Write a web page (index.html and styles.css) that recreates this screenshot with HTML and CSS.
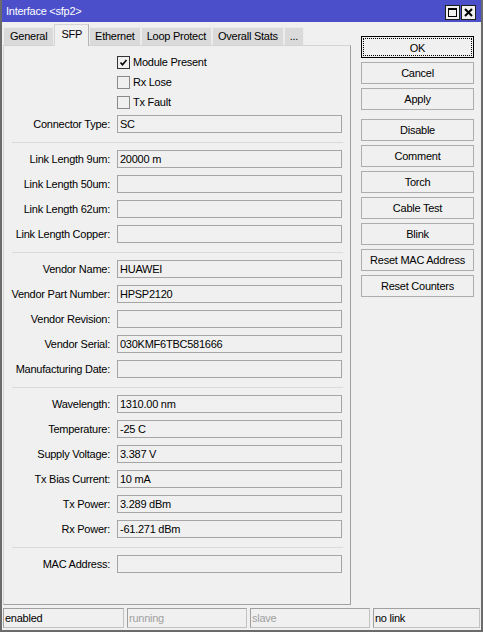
FILE: index.html
```html
<!DOCTYPE html>
<html lang="en">
<head>
    <meta charset="UTF-8">
    <title>Interface &lt;sfp2&gt;</title>
    <link rel="stylesheet" href="styles.css">
</head>
<body>
    <div class="window">
        <div class="titlebar">
            <span class="title">Interface &lt;sfp2&gt;</span>
            <div class="title-buttons">
                <span class="tbtn">
                    <svg width="13" height="13" viewBox="0 0 13 13"><rect x="2.5" y="2.5" width="8" height="8" fill="none" stroke="#000"/><line x1="2" y1="3.5" x2="11" y2="3.5" stroke="#000"/></svg>
                </span>
                <span class="tbtn">
                    <svg width="13" height="13" viewBox="0 0 13 13"><path d="M3 3 L10 10 M10 3 L3 10" stroke="#000" stroke-width="2"/></svg>
                </span>
            </div>
        </div>

        <div class="main">
            <div class="left">
                <div class="tabs">
                    <div class="tab">General</div>
                    <div class="tab active">SFP</div>
                    <div class="tab">Ethernet</div>
                    <div class="tab">Loop Protect</div>
                    <div class="tab">Overall Stats</div>
                    <div class="tab">...</div>
                </div>
                <div class="panel">
                    <div class="check-row">
                        <span class="checkbox checked"><svg width="11" height="11" viewBox="0 0 11 11"><path d="M2.5 5.5 L4.5 7.8 L8.5 3" fill="none" stroke="#000" stroke-width="1.6"/></svg></span>
                        Module Present
                    </div>
                    <div class="check-row"><span class="checkbox"></span>Rx Lose</div>
                    <div class="check-row"><span class="checkbox"></span>Tx Fault</div>

                    <div class="row first"><label>Connector Type:</label><div class="field">SC</div></div>
                    <div class="sep"></div>
                    <div class="row"><label>Link Length 9um:</label><div class="field">20000 m</div></div>
                    <div class="row"><label>Link Length 50um:</label><div class="field"></div></div>
                    <div class="row"><label>Link Length 62um:</label><div class="field"></div></div>
                    <div class="row"><label>Link Length Copper:</label><div class="field"></div></div>
                    <div class="sep"></div>
                    <div class="row"><label>Vendor Name:</label><div class="field">HUAWEI</div></div>
                    <div class="row"><label>Vendor Part Number:</label><div class="field">HPSP2120</div></div>
                    <div class="row"><label>Vendor Revision:</label><div class="field"></div></div>
                    <div class="row"><label>Vendor Serial:</label><div class="field">030KMF6TBC581666</div></div>
                    <div class="row"><label>Manufacturing Date:</label><div class="field"></div></div>
                    <div class="sep"></div>
                    <div class="row"><label>Wavelength:</label><div class="field">1310.00 nm</div></div>
                    <div class="row"><label>Temperature:</label><div class="field">-25 C</div></div>
                    <div class="row"><label>Supply Voltage:</label><div class="field">3.387 V</div></div>
                    <div class="row"><label>Tx Bias Current:</label><div class="field">10 mA</div></div>
                    <div class="row"><label>Tx Power:</label><div class="field">3.289 dBm</div></div>
                    <div class="row"><label>Rx Power:</label><div class="field">-61.271 dBm</div></div>
                    <div class="sep"></div>
                    <div class="row"><label>MAC Address:</label><div class="field"></div></div>
                </div>
            </div>

            <div class="buttons">
                <div class="btn default"><span>OK</span></div>
                <div class="btn">Cancel</div>
                <div class="btn">Apply</div>
                <div class="btn group-start">Disable</div>
                <div class="btn">Comment</div>
                <div class="btn">Torch</div>
                <div class="btn">Cable Test</div>
                <div class="btn">Blink</div>
                <div class="btn">Reset MAC Address</div>
                <div class="btn">Reset Counters</div>
            </div>
        </div>

        <div class="statusbar">
            <div class="status">enabled</div>
            <div class="status dim">running</div>
            <div class="status dim">slave</div>
            <div class="status">no link</div>
        </div>
    </div>
</body>
</html>
```

FILE: styles.css
```css
body {
    margin: 0;
    font-family: "Liberation Sans", Arial, sans-serif;
    font-size: 11px;
    letter-spacing: -0.25px;
    color: #000;
    background-color: #f0f0f0;
}
.window {
    width: 483px;
    height: 632px;
    box-sizing: border-box;
    border: 2px solid #6b6b6b;
    border-top: 0;
    background-color: #f0f0f0;
    display: flex;
    flex-direction: column;
}

/* title bar */
.titlebar {
    height: 22px;
    background-color: #4b4fc9;
    display: flex;
    align-items: flex-start;
    justify-content: space-between;
}
.title {
    color: #fff;
    padding-left: 4px;
    line-height: 22px;
}
.title-buttons {
    display: flex;
    gap: 1px;
    margin-top: 5px;
    margin-right: 5px;
}
.tbtn {
    width: 15px;
    height: 15px;
    box-sizing: border-box;
    border: 1px solid #1e1e1e;
    background-color: #f0f0f0;
    display: flex;
    align-items: center;
    justify-content: center;
}

.main {
    flex: 1;
    display: flex;
}
.left {
    margin-left: 1px;
    width: 348px;
}

/* tabs */
.tabs {
    height: 23px;
    display: flex;
    align-items: flex-end;
    position: relative;
    z-index: 1;
}
.tab {
    height: 18px;
    box-sizing: border-box;
    padding: 0 5px;
    line-height: 17px;
    background-color: #dadada;
    border: 1px solid #ececec;
    border-bottom: 0;
}
.tab:first-child {
    padding: 0 6px;
}
.tab.active {
    height: 22px;
    margin-bottom: -1px;
    line-height: 19px;
    padding: 0 6px;
    background-color: #f0f0f0;
    border-color: #d4d4d4;
    border-right-color: #b4b4b4;
}

/* panel */
.panel {
    height: 560px;
    box-sizing: border-box;
    border: 1px solid #d4d4d4;
    border-right-color: #a0a0a0;
    border-bottom-color: #a0a0a0;
    padding-top: 6px;
}
.check-row {
    height: 20px;
    display: flex;
    align-items: center;
    padding-left: 113px;
}
.checkbox {
    width: 13px;
    height: 13px;
    box-sizing: border-box;
    border: 1px solid #8a8a8a;
    margin-right: 3px;
    display: flex;
    align-items: center;
    justify-content: center;
}
.checkbox.checked {
    border-color: #333;
}
.row {
    display: flex;
    margin-top: 7px;
}
.row.first {
    margin-top: 3px;
}
.row label {
    width: 106px;
    text-align: right;
    line-height: 18px;
    margin-right: 7px;
    white-space: nowrap;
}
.field {
    width: 225px;
    height: 18px;
    box-sizing: border-box;
    border: 1px solid #a5a5a5;
    padding: 0 2px;
    line-height: 16px;
}
.sep {
    height: 1px;
    margin: 9px 7px 0 8px;
    background-color: #dadada;
}

/* right buttons */
.buttons {
    margin-left: 10px;
    width: 113px;
    padding-top: 14px;
}
.btn {
    height: 22px;
    box-sizing: border-box;
    margin-bottom: 4px;
    border: 1px solid #adadad;
    background-color: #f0f0f0;
    text-align: center;
    line-height: 20px;
}
.btn.default {
    border-color: #000;
    padding: 1px;
}
.btn.default span {
    display: block;
    height: 18px;
    line-height: 18px;
    border: 1px dotted #000;
    box-sizing: border-box;
}
.btn.group-start {
    margin-top: 9px;
}

/* status bar */
.statusbar {
    height: 20px;
    margin: 0 0 2px 1px;
    display: flex;
    gap: 3px;
}
.status {
    width: 121px;
    box-sizing: border-box;
    border: 1px solid #c2c2c2;
    border-top-color: #a0a0a0;
    border-left-color: #a0a0a0;
    padding-left: 1px;
    line-height: 18px;
}
.status:nth-child(2),
.status:nth-child(3) {
    width: 120px;
}
.status:last-child {
    width: 107px;
}
.status.dim {
    color: #a0a0a0;
}
```
